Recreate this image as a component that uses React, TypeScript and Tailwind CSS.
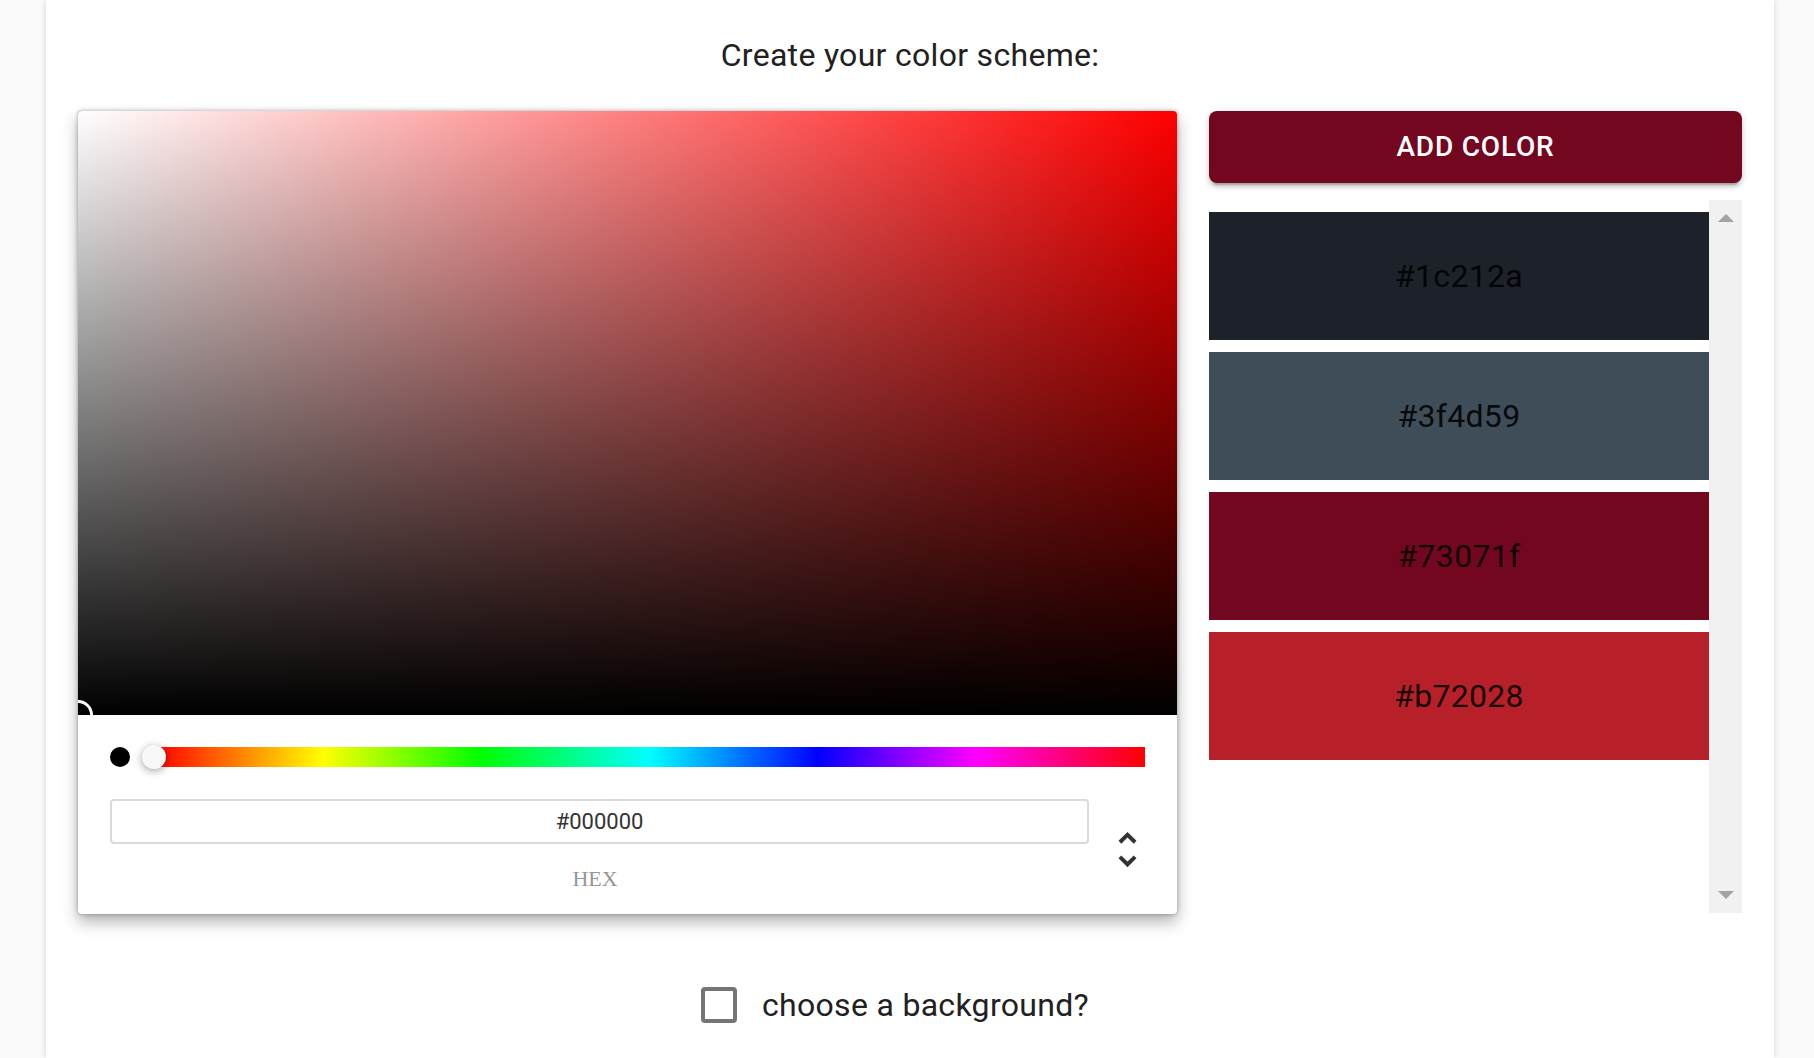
import React from "react";

const swatches = ["#1c212a", "#3f4d59", "#73071f", "#b72028"];

// Chrome-style picker, fixed at black (hue 0)
function ColorPicker() {
  return (
    <div className="flex-1 rounded-[4px] bg-white shadow-[0_0_4px_rgba(0,0,0,0.3),0_8px_16px_rgba(0,0,0,0.3)]">
      {/* Saturation / value area */}
      <div className="relative h-[604px] overflow-hidden rounded-t-[4px] bg-[#ff0000]">
        <div className="absolute inset-0 bg-[linear-gradient(to_right,#fff,rgba(255,255,255,0))]" />
        <div className="absolute inset-0 bg-[linear-gradient(to_top,#000,rgba(0,0,0,0))]" />
        <div className="absolute bottom-[-12px] left-[-12px] h-[24px] w-[24px] rounded-full shadow-[0_0_0_3px_#fff,inset_0_0_2px_2px_rgba(0,0,0,0.3)]" />
      </div>

      <div className="px-[32px] pt-[32px] pb-[23px]">
        {/* Swatch + hue slider */}
        <div className="flex h-[20px] items-center">
          <div className="h-[20px] w-[20px] rounded-full bg-black" />
          <div className="relative ml-[24px] h-[20px] flex-1 bg-[linear-gradient(to_right,#f00_0%,#ff0_17%,#0f0_33%,#0ff_50%,#00f_67%,#f0f_83%,#f00_100%)]">
            <div className="absolute left-[-12px] top-1/2 h-[24px] w-[24px] -translate-y-1/2 rounded-full bg-[#f8f8f8] shadow-[0_2px_8px_rgba(0,0,0,0.37)]" />
          </div>
        </div>

        {/* Fields */}
        <div className="mt-[32px] flex items-start">
          <div className="flex flex-1 flex-col">
            <input
              readOnly
              value="#000000"
              className="h-[45px] w-full rounded-[4px] border-2 border-[#dadada] text-center text-[22px] text-[#333] outline-none"
            />
            <div className="mt-[23px] pr-[9px] text-center font-['Liberation_Serif',serif] text-[22px] leading-[24px] text-[#969696]">
              HEX
            </div>
          </div>
          <svg
            viewBox="0 0 24 24"
            className="mt-[27px] ml-[15px] -mr-[6px] h-[47px] w-[47px] flex-none"
          >
            <path fill="#333" d="M12,5.83L15.17,9L16.58,7.59L12,3L7.41,7.59L8.83,9L12,5.83Z" />
            <path fill="#333" d="M12,18.17L8.83,15L7.42,16.41L12,21L16.59,16.41L15.17,15L12,18.17Z" />
          </svg>
        </div>
      </div>
    </div>
  );
}

export default function App() {
  return (
    <div className="h-screen overflow-hidden bg-[#fafafa] font-['Roboto',sans-serif]">
      <div className="ml-[46px] h-full w-[1728px] bg-white px-[32px] shadow-[0_0_6px_rgba(0,0,0,0.16)]">
        <h1 className="pt-[36px] text-center text-[32px] leading-[38px] font-normal tracking-[0.3px] text-[#212121]">
          Create your color scheme:
        </h1>

        <div className="mt-[37px] flex gap-[32px]">
          <ColorPicker />

          <div className="flex w-[533px] flex-col">
            <button className="h-[72px] rounded-[8px] bg-[#73071f] text-[28px] font-medium uppercase tracking-[0.8px] text-white shadow-[0_6px_2px_-4px_rgba(0,0,0,0.2),0_4px_4px_0_rgba(0,0,0,0.14),0_2px_10px_0_rgba(0,0,0,0.12)]">
              Add color
            </button>

            {/* Saved colors list */}
            <div className="mt-[17px] flex h-[713px]">
              <div className="flex flex-1 flex-col gap-[12px] pt-[12px]">
                {swatches.map((c) => (
                  <div
                    key={c}
                    className="flex h-[128px] items-center justify-center text-[32px] tracking-[0.3px] text-black/90"
                    style={{ backgroundColor: c }}
                  >
                    {c}
                  </div>
                ))}
              </div>
              <div className="flex w-[33px] flex-col items-center justify-between bg-[#f1f1f1] py-[14px]">
                <svg width="16" height="8" viewBox="0 0 16 8">
                  <path d="M8 0L16 8H0Z" fill="#a3a3a3" />
                </svg>
                <svg width="16" height="8" viewBox="0 0 16 8">
                  <path d="M0 0H16L8 8Z" fill="#a3a3a3" />
                </svg>
              </div>
            </div>
          </div>
        </div>

        {/* Background toggle */}
        <div className="mt-[73px] flex justify-center pr-[30px]">
          <label className="flex items-center">
            <span className="h-[36px] w-[36px] rounded-[4px] border-[4px] border-[#757575]" />
            <span className="ml-[25px] text-[32px] leading-[36px] tracking-[0.3px] text-[#212121]">
              choose a background?
            </span>
          </label>
        </div>
      </div>
    </div>
  );
}
